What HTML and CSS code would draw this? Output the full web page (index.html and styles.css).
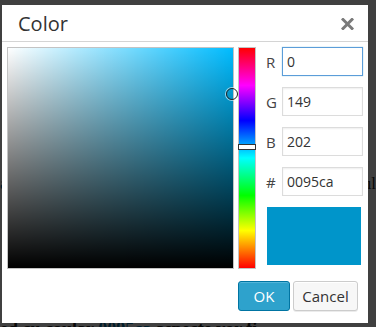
FILE: index.html
```html
<!DOCTYPE html>
<html>
<head>
<meta charset="utf-8">
<link rel="stylesheet" href="styles.css">
</head>
<body>
<div class="page">
  <p class="line1"><span class="lnk">ab</span> ipsum dolor sit amet consectetur ul</p>
  <p class="line2">ed cu coular <span class="lnk">0095ca</span> aspecte vor fi</p>
</div>
<div class="overlay"></div>
<div class="dialog">
  <div class="head">
    <span class="title">Color</span>
    <svg class="close" width="13" height="12" viewBox="0 0 13 12"><path d="M2 1.5 L11 10.5 M11 1.5 L2 10.5" stroke="#7a7a7a" stroke-width="3" stroke-linecap="square"/></svg>
  </div>
  <div class="body">
    <div class="map">
      <div class="map-white"></div>
      <div class="map-black"></div>
      <div class="map-dot"></div>
    </div>
    <div class="hue"><div class="hue-handle"></div></div>
    <div class="fields">
      <div class="row"><span class="lbl">R</span><input class="inp focus" value="0"></div>
      <div class="row"><span class="lbl">G</span><input class="inp" value="149"></div>
      <div class="row"><span class="lbl">B</span><input class="inp" value="202"></div>
      <div class="row"><span class="lbl">#</span><input class="inp" value="0095ca"></div>
      <div class="preview"></div>
    </div>
  </div>
  <div class="foot">
    <button class="btn ok">OK</button>
    <button class="btn cancel">Cancel</button>
  </div>
</div>
</body>
</html>
```
FILE: styles.css
```css
html, body { margin: 0; padding: 0; }
body {
  width: 376px; height: 327px; overflow: hidden; position: relative;
  background: #fff;
  font-family: "Open Sans", "Noto Sans", sans-serif;
}
.page {
  font-family: "Liberation Serif", serif; font-size: 17px; color: #222;
  padding: 174px 0 0 0;
}
.page p { margin: 0; }
.line1 { text-align: justify; text-align-last: justify; }
.line2 { margin-top: 125px !important; font-size: 18px; font-weight: bold; }
.lnk { color: #0073aa; }
.overlay {
  position: absolute; left: 0; top: 0; right: 0; bottom: 0;
  background: rgba(0,0,0,0.75);
}
.dialog {
  position: absolute; left: 2px; top: 5px; width: 366px; height: 318px;
  background: #fff; box-sizing: border-box;
  display: flex; flex-direction: column;
}
.head {
  height: 36px; border-bottom: 1px solid #d4d4d4;
  display: flex; align-items: center; justify-content: space-between;
  padding: 0 14px 0 16px; flex: none;
}
.title { font-size: 20px; color: #333; margin-top: 1px; }
.close { margin-top: 1px; }
.body {
  display: flex; padding: 5px 0 0 5px; flex: none;
}
.map {
  position: relative; width: 225px; height: 220px;
  border: 1px solid #c3c3c3;
  background: #00bcff;
}
.map-white { position: absolute; inset: 0; background: linear-gradient(to right, #fff, rgba(255,255,255,0)); }
.map-black { position: absolute; inset: 0; background: linear-gradient(to bottom, rgba(0,0,0,0), #000); }
.map-dot {
  position: absolute; left: 218px; top: 40px; width: 10px; height: 10px;
  border: 1px solid #222; border-radius: 50%; box-shadow: 0 0 0 1px rgba(255,255,255,0.6);
}
.hue {
  position: relative; margin-left: 4px; width: 16px; height: 220px;
  border: 1px solid #c3c3c3;
  background: linear-gradient(to bottom, #f00 0%, #f0f 17%, #00f 33%, #0ff 50%, #0f0 67%, #ff0 83%, #f00 100%);
}
.hue-handle {
  position: absolute; left: -1px; right: -1px; top: 96px; height: 4px;
  background: #fff; border: 1px solid #333;
}
.fields { margin-left: 10px; display: flex; flex-direction: column; width: 97px; }
.row { display: flex; align-items: center; height: 29px; margin-bottom: 11px; }
.lbl { width: 16px; font-size: 15px; color: #444; }
.inp {
  width: 81px; height: 29px; box-sizing: border-box; margin: 0;
  border: 1px solid #dcdcdc; padding: 0 4px; font-family: "Open Sans", sans-serif;
  font-size: 14px; color: #333; background: #fff;
  box-shadow: inset 0 1px 2px rgba(0,0,0,0.07); outline: none;
}
.inp.focus { border-color: #5b9dd9; box-shadow: 0 0 1px rgba(30,140,190,0.5); }
.preview { width: 94px; height: 58px; background: #0095ca; margin-left: 1px; }
.foot {
  display: flex; justify-content: flex-end; gap: 3px; padding: 12px 10px 0 0;
}
.btn {
  height: 30px; box-sizing: border-box; margin: 0; border-radius: 3px;
  font-family: "Open Sans", sans-serif; font-size: 15px; padding: 0;
}
.ok {
  width: 52px; background: #2ea2cc; border: 1px solid #0074a2; color: #fff;
  box-shadow: inset 0 1px 0 rgba(120,200,230,0.5);
}
.cancel {
  width: 65px; background: #f7f7f7; border: 1px solid #cccccc; color: #333;
  box-shadow: inset 0 1px 0 #fff, 0 1px 0 rgba(0,0,0,0.08);
}
```
